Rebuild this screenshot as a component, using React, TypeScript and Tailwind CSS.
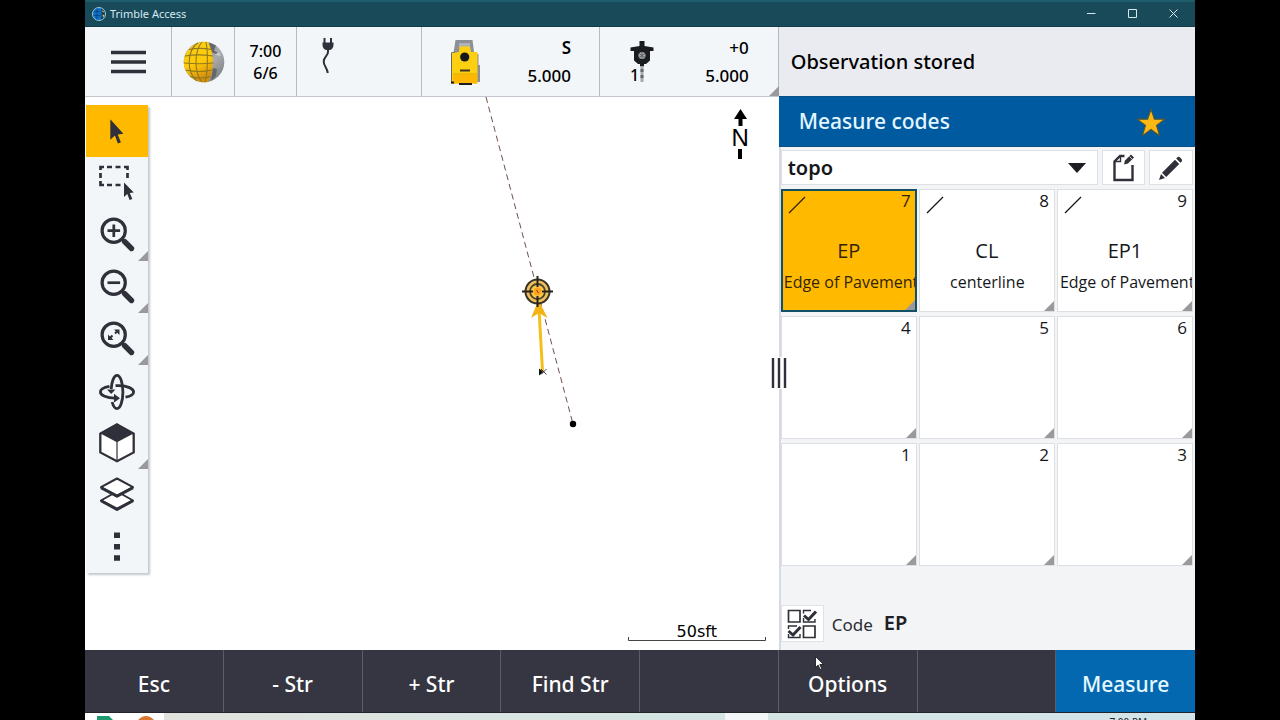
import { useState } from "react";
import type { ReactNode } from "react";
import clsx from "clsx";

const INK = "#2f3039";

/* ── Data ───────────────────────────────────────────────────────── */
type Code = { key: string; code?: string; description?: string };

const codes: Code[] = [
  { key: "7", code: "EP", description: "Edge of Pavement" },
  { key: "8", code: "CL", description: "centerline" },
  { key: "9", code: "EP1", description: "Edge of Pavement" },
  { key: "4" },
  { key: "5" },
  { key: "6" },
  { key: "1" },
  { key: "2" },
  { key: "3" },
];

const softkeys = ["Esc", "- Str", "+ Str", "Find Str", "", "Options", "", "Measure"];

const magnifier = (
  <>
    <circle cx="27.7" cy="21.7" r="11.6" fill="none" stroke={INK} strokeWidth="3.2" />
    <path d="M36 30l2.6 2.6" stroke={INK} strokeWidth="3" />
    <path d="M38.5 32.5l7 7" stroke={INK} strokeWidth="5.4" strokeLinecap="round" />
  </>
);

const tools: { label: string; more?: boolean; icon: ReactNode }[] = [
  {
    label: "Select",
    icon: <path d="M24.3 14.3v20.4l4.6-4.3 3 8 3-1.2-3.2-7.7 5.7-.7z" fill={INK} />,
  },
  {
    label: "Area select",
    icon: (
      <>
        <path
          d="M14.5 13v-3h3.500M21 10h5M29.500 10h5M38 10h3.500v3M41.500 16v5M14.500 16v5M14.500 24v4h3.500M21 28h5M29.500 28h5"
          fill="none"
          stroke={INK}
          strokeWidth="2.7"
        />
        <path d="M38 25.500v14.500l3.300-3 2.300 6 2.700-1-2.500-6 4-.6z" fill={INK} />
      </>
    ),
  },
  {
    label: "Zoom in",
    more: true,
    icon: (
      <>
        {magnifier}
        <path d="M21.500 21.700h12.600M27.800 15.500v12.500" stroke={INK} strokeWidth="2.700" />
      </>
    ),
  },
  {
    label: "Zoom out",
    more: true,
    icon: (
      <>
        {magnifier}
        <path d="M21.500 21.700h12.600" stroke={INK} strokeWidth="2.700" />
      </>
    ),
  },
  {
    label: "Zoom to extents",
    more: true,
    icon: (
      <>
        {magnifier}
        <path d="M28 16.500h5.500V22zM22 21.500V27h5.500z" fill={INK} />
        <path d="M29 20.500l2.500-2.500M24 25l2.500-2.500" stroke={INK} strokeWidth="2" />
      </>
    ),
  },
  {
    label: "Orbit",
    icon: (
      <>
        <g fill="none" stroke={INK} strokeWidth="2.800">
          <path d="M25.200 24c.4-7.500 2.800-13.600 5.800-13.600 3.300 0 5.900 7.500 5.900 16.700S34.300 43.600 31 43.600c-2 0-3.800-2.600-4.900-6.600" />
          <path d="M23.500 21.400c-5.600 1-9.100 3-9.100 5.500 0 3.500 6.500 6 14.600 6.300M39.500 32.200c5-1 8.100-3 8.100-5.300 0-3.300-6.200-6-14.600-6.200h-3.500" />
        </g>
        <path d="M21 24.500h8.400L25.200 29zM28 28.800l6 4.400-6 4.400z" fill={INK} />
      </>
    ),
  },
  {
    label: "Isometric view",
    more: true,
    icon: (
      <>
        <path d="M31 7.400l16.700 9.300v18.700L31 44.200l-16.700-8.800V16.700z" fill="#fff" stroke={INK} strokeWidth="2.300" />
        <path d="M31 6.500l17 9.800-17 9-17-9z" fill={INK} />
        <path d="M31 25v18.500" stroke={INK} strokeWidth="1.200" />
      </>
    ),
  },
  {
    label: "Layers",
    icon: (
      <g fill="#fff" stroke={INK} strokeWidth="2" strokeLinejoin="round">
        <path d="M15 31.500l16-9 16 9-16 8.500z" />
        <path d="M15 31.800l16 8.600 16-8.600" fill="none" strokeWidth="3" />
        <path d="M15 18.200l16-8.700 16 8.700-16 8.500z" />
        <path d="M15 18.700l16 8.600 16-8.600" fill="none" strokeWidth="3" />
      </g>
    ),
  },
  {
    label: "More",
    icon: <path d="M28 11.500h6v5.500h-6zM28 23h6v5.500h-6zM28 34.200h6v5.500h-6z" fill={INK} />,
  },
];

/* ── Small pieces ───────────────────────────────────────────────── */
function Corner() {
  return (
    <svg className="absolute right-0 bottom-0 size-[10px]" viewBox="0 0 10 10">
      <path d="M10 0v10H0z" fill="#9a9a9c" />
    </svg>
  );
}

function AppIcon() {
  return (
    <svg className="size-[14px]" viewBox="0 0 14 14">
      <circle cx="7" cy="7" r="6.500" fill="#0f6fc0" stroke="#9cc7d8" />
      <path d="M9 1.500a6 6 0 0 1 0 11c1-3.500 1-7.500 0-11z" fill="#123038" />
      <path d="M10 3l2 1.500-1 1.500zM10.500 7.500l2 .5-1.500 3z" fill="#e0c95a" />
      <path d="M2 4.500h6M1.500 8.500h7M5 1.500v11" stroke="#0a3f86" strokeWidth=".8" />
    </svg>
  );
}

function Globe() {
  return (
    <svg className="size-[42px]" viewBox="0 0 42 42">
      <defs>
        <linearGradient id="gold" x1="0" y1="0" x2="0.300" y2="1">
          <stop offset="0" stopColor="#f7ce1e" />
          <stop offset="0.600" stopColor="#ffcb08" />
          <stop offset="1" stopColor="#d78f0c" />
        </linearGradient>
        <linearGradient id="moon" x1="0" y1="0" x2="1" y2="1">
          <stop offset="0" stopColor="#8d8f92" />
          <stop offset="0.600" stopColor="#a9abae" />
          <stop offset="1" stopColor="#6e7074" />
        </linearGradient>
      </defs>
      <circle cx="21" cy="21" r="20.300" fill="url(#moon)" />
      <path d="M26 1.500l7 3-2 5 5 3-5 1-4-4zM30 27l4 1-1 7-5 5z" fill="#64676c" />
      <path d="M27 11l6 2 3-2 2 4-5-1z" fill="#c9cbcd" />
      <path d="M25 1.100C14 -1 .7 8 .7 21S14 43.500 25 40.900C31 31 32 14 25 1.100z" fill="url(#gold)" />
      <g fill="none" stroke="#8f7a20" strokeWidth="1.100">
        <path d="M6 8.500c7-1.500 15-1.500 22.500 0M2 15c9-1.500 18-1.500 28 0M1 22c10 1 20 1 29.500 0M2.500 29c9 2 18 2 27 0M7 35.500c7 2 14 2 21 0" />
        <path d="M15 1.700C4 9 3 31 14 40M19 1C11 10 11 32 19 41M23 1c2 10 2 30-1 40" />
      </g>
    </svg>
  );
}

function Plug() {
  return (
    <svg className="h-[38px] w-[14px]" viewBox="0 0 14 38">
      <path d="M3.500 1v5M10 1v5" stroke={INK} strokeWidth="2" />
      <path d="M1.500 5.500h11v2.500c0 3-2 4.500-3.500 5H5c-1.500-.5-3.500-2-3.500-5z" fill={INK} />
      <path d="M7 12v3c0 4-4.300 5-4.300 9.500S6 30 6.800 36" fill="none" stroke={INK} strokeWidth="2" />
    </svg>
  );
}

function TotalStation() {
  return (
    <svg className="h-[46px] w-[32px]" viewBox="0 0 32 46">
      <path d="M5.500 1h17l2 16H3z" fill="#8d9096" />
      <path d="M9 4h11v5H9z" fill="#aeb1b7" />
      <path d="M26 15h2.500v11H30v17h-5z" fill="#8d9096" />
      <path d="M1 13.500l4-1v32H1z" fill="#6d6a5a" />
      <path d="M9.500 7.500h10.500l1 5.500h6.500v31.500H2V14l7-1z" fill="#fccf10" />
      <path d="M3 36h24v8.500H3z" fill="#ffb703" />
      <path d="M3 35h24" stroke="#e0a405" />
      <circle cx="14.700" cy="18" r="4.600" fill="#17181b" />
      <path d="M10 30.500h10v2H10z" fill="#3a3525" />
      <path d="M1 42.500h3v2H1zM9 44h13v2H9z" fill="#1d1d1f" />
    </svg>
  );
}

function Prism() {
  return (
    <svg className="h-[42px] w-[24px]" viewBox="0 0 24 42">
      <path d="M9.500 0h5v5l9 1.500v3.500h-3.500v9.500L16 23h-8l-4-3.500V10H.5V6.500l9-1.500z" fill="#1b1c20" />
      <circle cx="12" cy="14.500" r="3.600" fill="#a4a7ab" />
      <path d="M12 11v7M9 12.500l6 4M15 12.500l-6 4" stroke="#55585c" strokeWidth=".8" />
      <path d="M10 22.500h4v3h-4z" fill="#1b1c20" />
      <path d="M12 25v16" stroke="#a7aaad" strokeWidth="3" />
      <path d="M12 28v3M12 34v3" stroke="#65686c" strokeWidth="3" />
    </svg>
  );
}

/* ── Window chrome ──────────────────────────────────────────────── */
function TitleBar() {
  return (
    <header className="flex h-[27px] shrink-0 items-center border-t-2 border-b border-t-[#1f5d6d] border-b-[#113c49] bg-[#194a5a] pr-4 pl-[7px] text-[#d6e8ee]">
      <AppIcon />
      <h1 className="ml-1 flex-1 text-[11px]">Trimble Access</h1>
      <div className="flex items-center gap-[31px]">
        <button type="button" aria-label="Minimize">
          <svg className="size-[10px]" viewBox="0 0 10 10"><path d="M0 4.500h8.500" stroke="currentColor" /></svg>
        </button>
        <button type="button" aria-label="Maximize">
          <svg className="size-[10px]" viewBox="0 0 10 10"><path d="M.5 .5h8v8h-8z" fill="none" stroke="currentColor" /></svg>
        </button>
        <button type="button" aria-label="Close">
          <svg className="size-[10px]" viewBox="0 0 10 10"><path d="M.5 .5l8 8M8.500 .5l-8 8" stroke="currentColor" /></svg>
        </button>
      </div>
    </header>
  );
}

function StatusBar() {
  return (
    <div className="relative flex h-[70px] shrink-0 divide-x divide-[#b6bbc2] border-b border-[#c3c7cd] bg-[#f3f6f9] font-medium text-black">
      <button type="button" aria-label="Menu" className="flex w-[87px] items-center justify-center">
        <svg className="h-6 w-[35px]" viewBox="0 0 35 24">
          <path d="M0 2.500h35M0 12h35M0 21.500h35" stroke={INK} strokeWidth="3.300" />
        </svg>
      </button>
      <button type="button" aria-label="GNSS" className="flex w-[63px] items-center justify-center pt-px pl-[2px]">
        <Globe />
      </button>
      <button type="button" className="flex w-[62px] flex-col items-center justify-center text-base leading-[22px]">
        <span>7:00</span>
        <span>6/6</span>
      </button>
      <div className="w-[125px] pt-[10px] pl-6">
        <Plug />
      </div>
      <button type="button" className="flex w-[178px] items-center justify-between pr-7 pl-7">
        <TotalStation />
        <span className="pt-px text-right text-[17px] leading-7">
          <span className="block font-semibold">S</span>
          <span className="block">5.000</span>
        </span>
      </button>
      <button type="button" className="flex flex-1 items-center justify-between pr-[29px] pl-[30px]">
        <span className="flex items-end">
          <span className="-mr-[9px] text-base leading-4">1</span>
          <Prism />
        </span>
        <span className="pt-px text-right text-[17px] leading-7">
          <span className="block">+0</span>
          <span className="block">5.000</span>
        </span>
      </button>
      <Corner />
    </div>
  );
}

/* ── Map ────────────────────────────────────────────────────────── */
function MapView() {
  return (
    <div className="relative flex flex-1 flex-col justify-between overflow-hidden bg-white pt-2">
      <svg className="absolute inset-0 size-full" aria-label="Map">
        <path d="M401 0L488 327" stroke="#6e5048" strokeWidth="1" strokeDasharray="6 4" />
        <circle cx="488" cy="327" r="3.200" fill="#000" />
        <path d="M457.500 274L454 212" stroke="#f5bf1a" strokeWidth="3" />
        <path d="M453.500 203l9 18-8.500-5-8 5z" fill="#f3b215" />
        <path d="M454 271.500v7l4.500-3.500z" fill="#111" />
        <path d="M456 272l5.500 5.500M461.500 272l-5.500 5.500" stroke="#333" strokeWidth=".9" />
        <circle cx="452.500" cy="194.500" r="12" fill="#eec15a" stroke="#383227" strokeWidth="2" />
        <circle cx="452.500" cy="194.500" r="7.500" fill="#fbc94a" stroke="#4a4130" strokeWidth="1.800" />
        <circle cx="452.500" cy="194.500" r="4" fill="#ffa51c" />
        <path d="M437 194.500h11M457 194.500h11M452.500 179v11M452.500 199v11" stroke="#26221a" strokeWidth="2" />
        <path d="M451.500 193l2 3" stroke="#7a3a12" />
      </svg>

      <nav aria-label="Map tools" className="relative ml-px w-[62px] bg-[#f2f6f8] shadow-[2px_2px_2px_#c4c8cb]">
        {tools.map((tool, i) => (
          <button
            key={tool.label}
            type="button"
            aria-label={tool.label}
            className={clsx("relative block h-[52px] w-full", i === 0 && "bg-[#ffba00]")}
          >
            <svg className="h-[52px] w-[62px]" viewBox="0 0 62 52">{tool.icon}</svg>
            {tool.more && <Corner />}
          </button>
        ))}
      </nav>

      <div className="absolute top-3 right-[30px] flex flex-col items-center text-black">
        <svg className="h-[17px] w-[13px]" viewBox="0 0 13 17">
          <path d="M6.500 0L13 10H8.500v7h-4v-7H0z" />
        </svg>
        <span className="font-['Liberation_Sans',sans-serif] text-2xl leading-[23px]">N</span>
        <svg className="h-[10px] w-1" viewBox="0 0 4 10"><path d="M0 0h4v10H0z" /></svg>
      </div>

      <div className="relative mr-[13px] mb-[9px] flex w-[138px] flex-col items-center self-end text-black">
        <span className="font-['DejaVu_Sans',sans-serif] text-base leading-4">50sft</span>
        <svg className="-mt-[3px] h-1 w-full" viewBox="0 0 138 4">
          <path d="M.5 0v3.500h137V0" fill="none" stroke="#444" />
        </svg>
      </div>
    </div>
  );
}

/* ── Measure codes panel ────────────────────────────────────────── */
function CodeButton({ item, active, onSelect }: { item: Code; active: boolean; onSelect: () => void }) {
  return (
    <button
      type="button"
      onClick={onSelect}
      aria-pressed={active}
      className={clsx(
        "relative flex h-[123px] min-w-0 flex-col overflow-hidden font-['Open_Sans',sans-serif]",
        active ? "border-2 border-[#125068] bg-[#ffba00] text-[#33230a]" : "border border-[#dcdfe3] bg-white p-px text-[#16171b]",
      )}
    >
      <span className="flex w-full items-start justify-between pr-1 pl-[5px]">
        <svg className="mt-[5px] size-[18px]" viewBox="0 0 18 18">
          {item.code && <path d="M1 17L17 1" stroke="currentColor" strokeWidth="1.300" />}
        </svg>
        <span className="text-[17px] leading-5">{item.key}</span>
      </span>
      <span className="mt-[21px] w-full text-center text-xl leading-[32px]">{item.code}</span>
      <span className={clsx("w-full pl-px text-base leading-[31px] whitespace-nowrap", item.description === "centerline" ? "text-center" : "text-left")}>
        {item.description}
      </span>
      <Corner />
    </button>
  );
}

function CodesPanel() {
  const [selected, setSelected] = useState("7");

  return (
    <section className="flex min-w-0 flex-col">
      <p className="flex h-[69px] shrink-0 items-center bg-[#e9ebf0] px-3 text-xl font-medium text-black" role="status">
        Observation stored
      </p>
      <div className="flex h-[51px] shrink-0 items-center justify-between border-y border-[#0b4f87] bg-[#005a9f] pr-7 pl-5">
        <h2 className="text-[21px] font-medium text-[#e4f6ff]">Measure codes</h2>
        <button type="button" aria-label="Favorite" className="pt-[2px]">
          <svg className="size-8" viewBox="0 0 29 29">
            <path
              d="M14.500 2l3.100 9h9.400l-7.500 5.700 2.800 9.300-7.800-5.600-7.800 5.600 2.800-9.300L2 11h9.400z"
              fill="#fdb813"
              stroke="#4f5638"
              strokeWidth="1"
            />
          </svg>
        </button>
      </div>

      <div className="flex flex-1 flex-col border-l-2 border-[#d7dade] bg-[#f2f4f6] pt-[3px] pr-[2px]">
        <div className="flex h-[35px] gap-1">
          <div className="relative flex-1 border border-[#dcdfe3] bg-white">
            <select aria-label="Code group" className="size-full appearance-none pl-[6px] text-xl font-semibold text-[#16171b]" defaultValue="topo">
              <option>topo</option>
            </select>
            <svg className="pointer-events-none absolute top-3 right-[11px] h-[10px] w-[18px]" viewBox="0 0 18 10">
              <path d="M0 0h18L9 10z" fill="#1d1e22" />
            </svg>
          </div>
          <button type="button" aria-label="Edit group" className="flex w-[43px] items-center justify-center border border-[#dcdfe3] bg-white pb-[2px]">
            <svg className="h-[30px] w-6" viewBox="0 0 24 30">
              <path d="M12.500 4H8L2.500 9.500V28h18V13" fill="none" stroke={INK} strokeWidth="2.400" />
              <path d="M8.500 4v5.500H3" fill="none" stroke={INK} strokeWidth="1.400" />
              <path d="M12 12.500l1-4 6-6 3 3-6 6z" fill={INK} />
              <path d="M17.500 4.500l3 3" stroke="#fff" strokeWidth=".8" />
            </svg>
          </button>
          <button type="button" aria-label="Edit" className="flex w-[44px] items-center justify-center border border-[#dcdfe3] bg-white">
            <svg className="size-[26px]" viewBox="0 0 26 26">
              <path d="M1 25l2-6 4 4zM4 17.800L17 4.800l4.200 4.200-13 13zM18.200 3.600l1.300-1.300q1.200-.9 2.300 0l1.900 1.900q.9 1.100 0 2.300l-1.300 1.300z" fill={INK} />
            </svg>
          </button>
        </div>

        <div className="mt-1 grid grid-cols-3 gap-x-[2px] gap-y-1">
          {codes.map((item) => (
            <CodeButton key={item.key} item={item} active={item.key === selected} onSelect={() => setSelected(item.key)} />
          ))}
        </div>

        <div className="mt-auto mb-2 flex h-[37px] items-center">
          <button type="button" aria-label="Multi-code" className="flex h-full w-[43px] items-center justify-center border border-[#dfe2e6] bg-white">
            <svg className="size-[30px]" viewBox="0 0 30 30">
              <g fill="none" stroke={INK} strokeWidth="1.700">
                <path d="M1.500 1.500h11.500v11.500H1.500zM16.500 17h11.500v11.500H16.500z" />
                <path d="M24 1.500h-7.500v3M16.500 9v4h11.500V10M10 17H1.500v3M1.500 25v3.500h11.500V25" strokeWidth="1.400" />
              </g>
              <path d="M17 6.500l4.500 4 7.500-8M1.500 22l4.500 4 7.500-8" fill="none" stroke={INK} strokeWidth="3" />
            </svg>
          </button>
          <label htmlFor="code" className="ml-2 pt-[2px] text-[17px] text-[#2b2c33]">Code</label>
          <input id="code" readOnly value="EP" className="ml-[11px] w-40 min-w-0 bg-transparent pb-[2px] text-xl font-semibold text-[#1f2026] outline-none" />
        </div>
      </div>
    </section>
  );
}

export default function App() {
  return (
    <div className="h-screen overflow-hidden bg-black px-[85px] font-['Noto_Sans','Open_Sans',sans-serif]">
      <div className="relative flex h-full flex-col">
        <TitleBar />

        <main className="relative grid min-h-0 flex-1 grid-cols-[5fr_3fr]">
          <section className="flex min-w-0 flex-col">
            <StatusBar />
            <MapView />
          </section>
          <CodesPanel />

          {/* Splitter grip, centred on the pane boundary */}
          <button type="button" aria-label="Resize panes" className="absolute top-[330px] left-[62.5%] -translate-x-1/2 bg-white">
            <svg className="h-8 w-4" viewBox="0 0 16 32">
              <path d="M2 1v30M8 1v30M14 1v30" stroke={INK} strokeWidth="2.400" />
            </svg>
          </button>
        </main>

        <footer className="grid h-[63px] shrink-0 grid-cols-8 divide-x divide-[#5b5c67] border-b border-[#22232b] bg-[#353641]">
          {softkeys.map((label, i) => (
            <button
              key={i}
              type="button"
              disabled={!label}
              className={clsx("pt-2 text-[21px] font-medium", label === "Measure" ? "bg-[#0468b1] text-[#e4f8ff]" : "text-white")}
            >
              {label}
            </button>
          ))}
        </footer>

        {/* Desktop taskbar peeking out below the window */}
        <div className="flex h-[7px] shrink-0 overflow-hidden bg-linear-to-r from-[#e3e2dd] via-[#d5e5e2] to-[#d3e4ea]">
          <div className="flex w-[79px] gap-[25px] bg-white pt-[3px] pl-3">
            <svg className="h-1 w-4" viewBox="0 0 16 4"><path d="M0 0h12l4 4H0z" fill="#1e9a70" /></svg>
            <svg className="h-1 w-4" viewBox="0 0 16 4"><path d="M0 4q8-8 16 0z" fill="#d9772e" /></svg>
          </div>
          <div className="ml-auto w-[43px] bg-white/70" />
          <time className="w-[427px] pt-[3px] pr-12 text-right text-[10px] leading-3 text-[#1c2226]">7:00 PM</time>
        </div>

        {/* Mouse pointer */}
        <svg className="pointer-events-none absolute bottom-[50px] left-[65.8%] h-[14px] w-[9px]" viewBox="0 0 9 14">
          <path d="M.5 .5v11l2.600-2.400 2 4.400 1.700-.8-2-4.200h3.700z" fill="#fff" stroke="#111" strokeWidth=".8" />
        </svg>
      </div>
    </div>
  );
}
